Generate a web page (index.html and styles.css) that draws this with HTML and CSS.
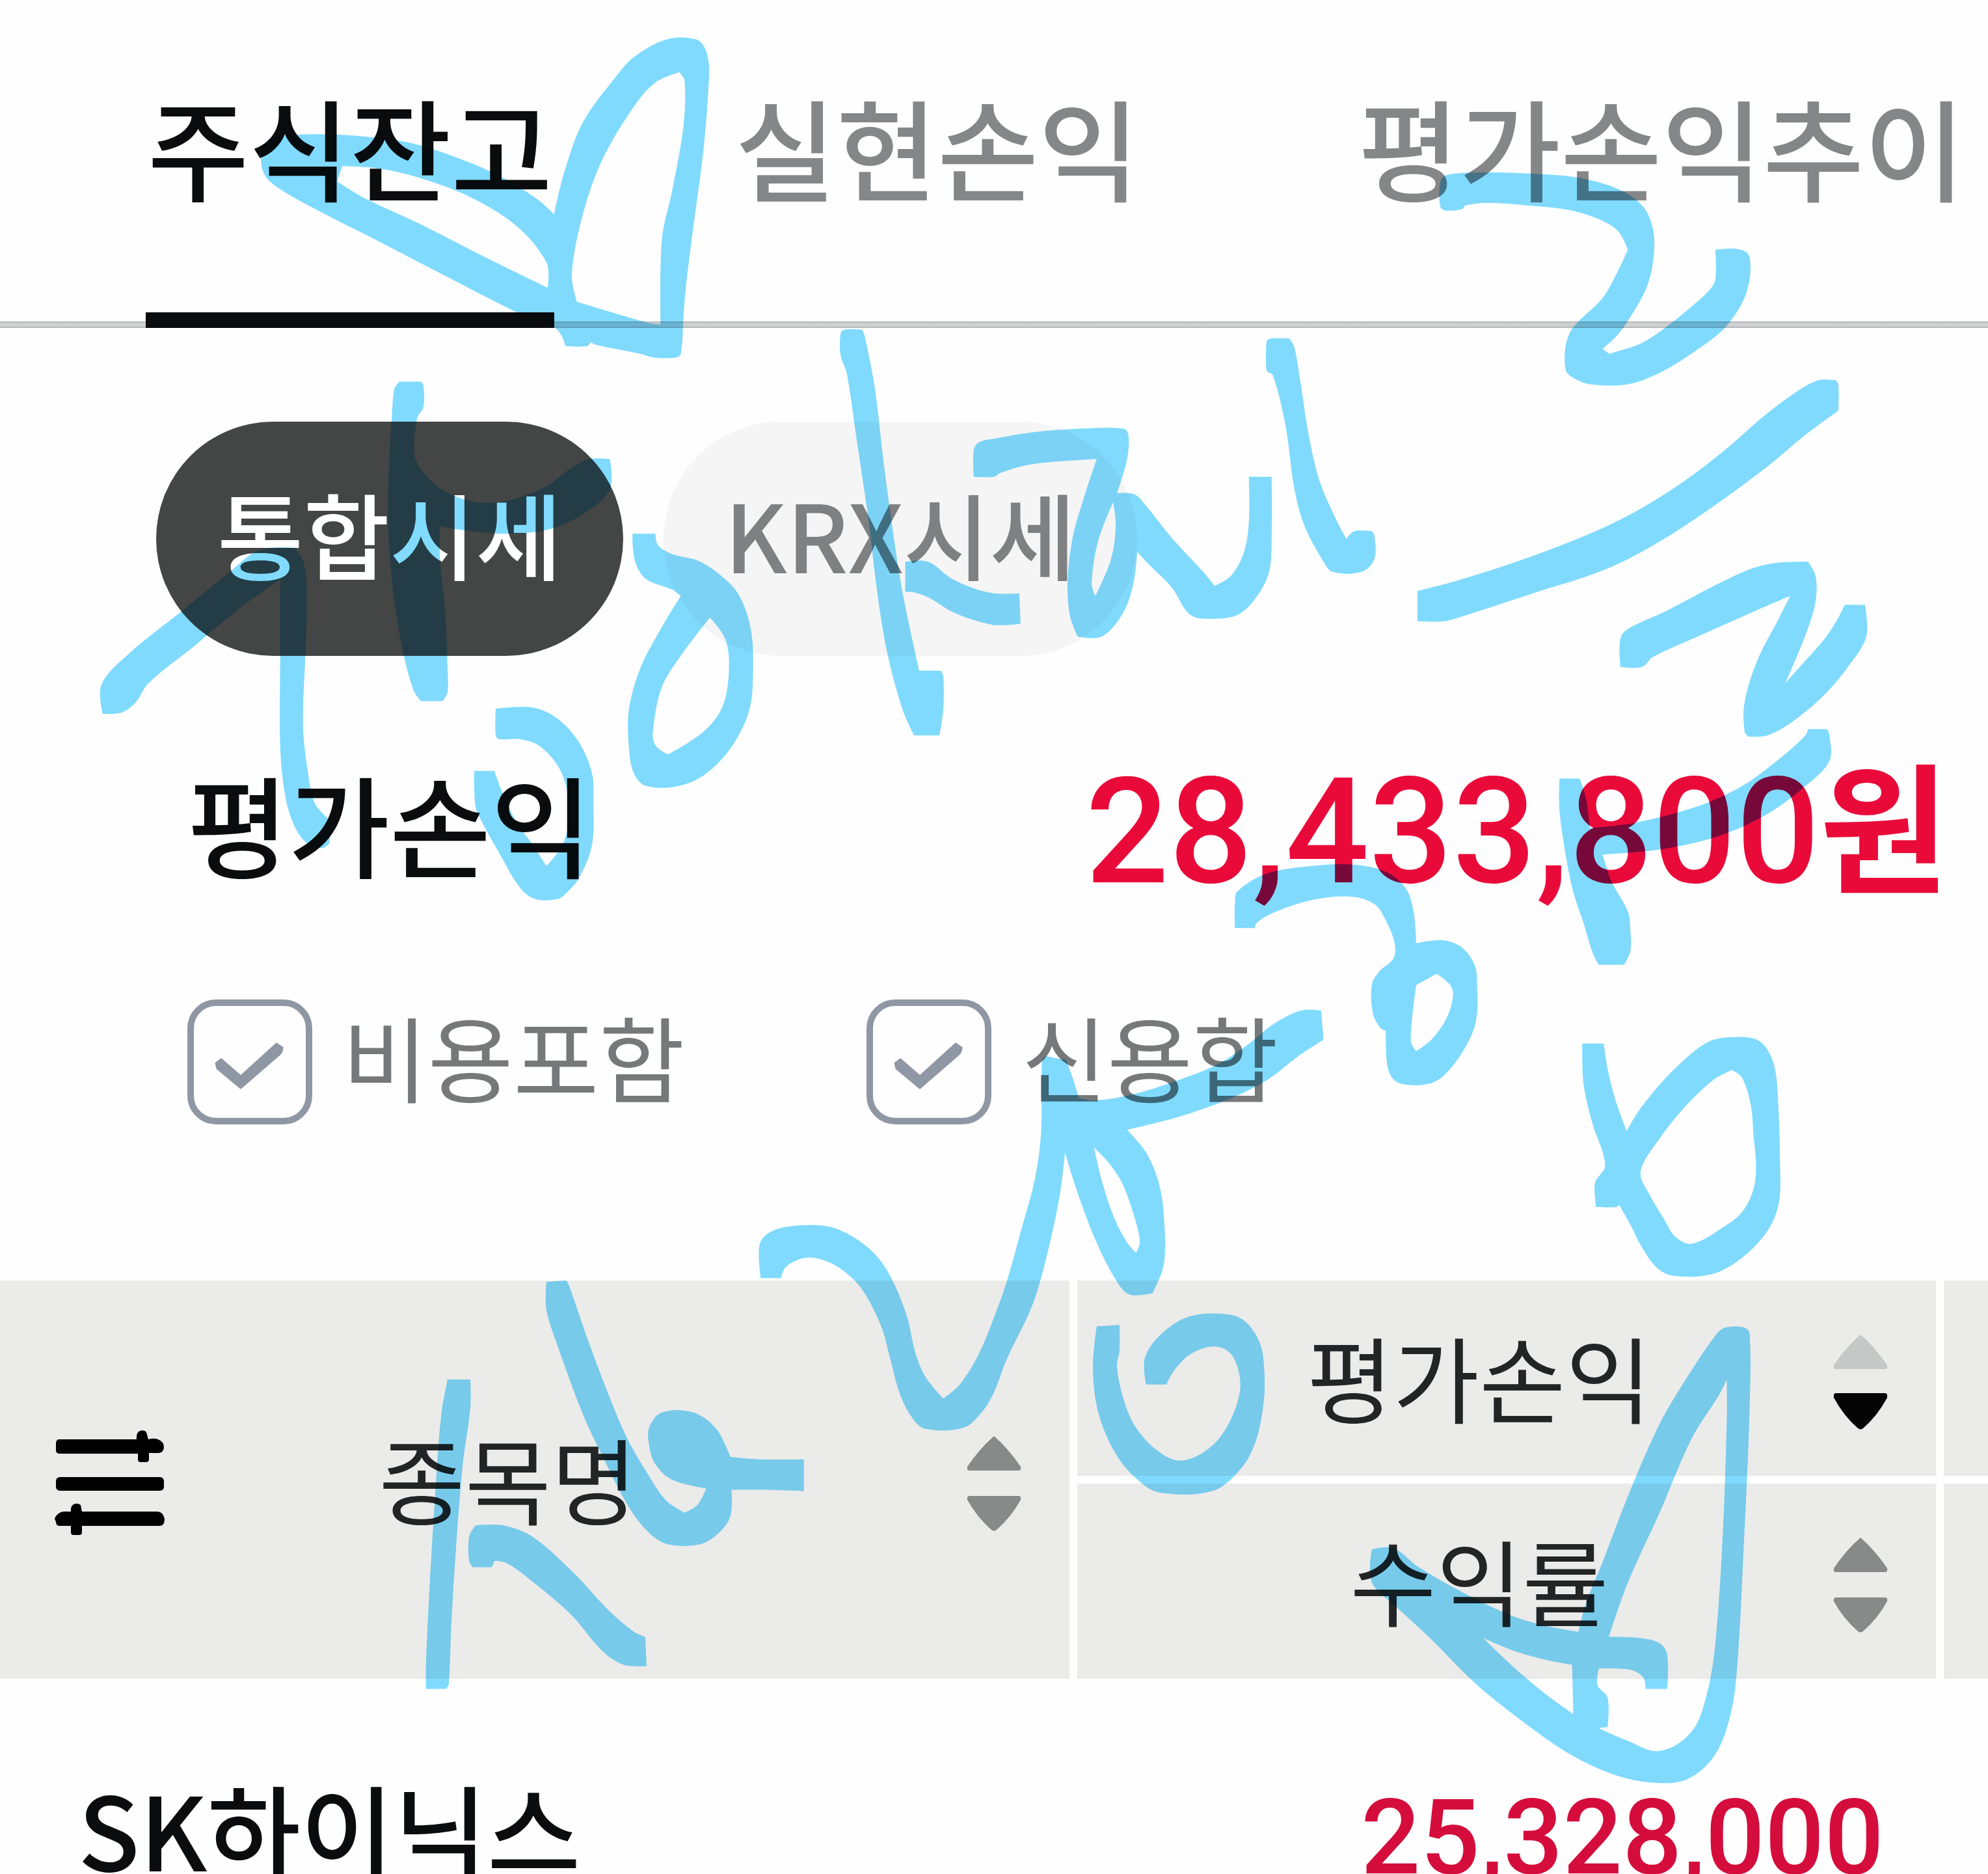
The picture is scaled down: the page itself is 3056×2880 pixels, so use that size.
FILE: index.html
```html
<!DOCTYPE html>
<html lang="ko">
<head>
<meta charset="utf-8">
<meta name="viewport" content="width=device-width, initial-scale=1">
<title>주식잔고</title>
<link rel="stylesheet" href="styles.css">
</head>
<body>
<main class="screen">
  <nav class="tabs">
    <a class="tab tab-active" href="#balance" aria-current="page">주식잔고</a>
    <a class="tab" href="#realized">실현손익</a>
    <a class="tab tab-last" href="#trend">평가손익추이</a>
  </nav>

  <div class="markets">
    <button class="pill pill-active" type="button">통합시세</button>
    <button class="pill" type="button">KRX시세</button>
  </div>

  <section class="summary">
    <h1 class="summary-title">평가손익</h1>
    <strong class="summary-amount">28,433,800<span class="summary-unit">원</span></strong>
  </section>

  <div class="options">
    <label class="option"><input class="check" type="checkbox" checked><span class="option-text">비용포함</span></label>
    <label class="option"><input class="check" type="checkbox" checked><span class="option-text">신용합</span></label>
  </div>

  <table class="holdings">
    <colgroup><col class="col-name"><col><col class="col-more"></colgroup>
    <thead>
      <tr>
        <th rowspan="2" scope="col">
          <div class="head head-name">
            <button class="settings" type="button" aria-label="설정">
              <svg class="settings-icon" viewBox="0 0 170 164" aria-hidden="true">
                <path d="M6 14H126Q125 4 131 1Q138 -1 141 3L144 14Q154 11 161 15Q168 18 168 27Q167 34 160 35H145V45Q145 49 140 49H132Q128 49 128 45V36H8Q2 36 2 31V20Q2 15 6 14Z"/>
                <rect x="2" y="72" width="166" height="21" rx="6"/>
                <path d="M25 125Q24 117 29 114Q35 111 40 115L42 125H158Q166 125 169 136Q169 147 162 147H42V157Q42 161 38 161H29Q25 161 25 157V147H8Q2 147 2 141L0 136Q4 126 14 125Z"/>
              </svg>
            </button>
            <button class="sort" type="button">
              <span class="sort-label">종목명</span>
              <svg class="arrows" viewBox="0 0 84 148" aria-hidden="true">
                <path class="arrow" d="M42 1Q64 20 83 48Q84 54 80 54H4Q0 54 1 48Q20 20 42 1Z"/>
                <path class="arrow" d="M4 93H80Q84 93 83 99Q68 126 46 145Q42 148 38 145Q16 126 1 99Q0 93 4 93Z"/>
              </svg>
            </button>
          </div>
        </th>
        <th scope="col">
          <div class="head">
            <button class="sort" type="button">
              <span class="sort-label">평가손익</span>
              <svg class="arrows" viewBox="0 0 84 148" aria-hidden="true">
                <path class="arrow arrow-dim" d="M42 1Q64 20 83 48Q84 54 80 54H4Q0 54 1 48Q20 20 42 1Z"/>
                <path class="arrow arrow-on" d="M4 91H80Q84 91 83 98Q68 126 46 145Q42 148 38 145Q16 126 1 98Q0 91 4 91Z"/>
              </svg>
            </button>
          </div>
        </th>
        <th></th>
      </tr>
      <tr>
        <th scope="col">
          <div class="head">
            <button class="sort" type="button">
              <span class="sort-label">수익률</span>
              <svg class="arrows" viewBox="0 0 84 148" aria-hidden="true">
                <path class="arrow" d="M42 1Q64 20 83 48Q84 54 80 54H4Q0 54 1 48Q20 20 42 1Z"/>
                <path class="arrow" d="M4 93H80Q84 93 83 99Q68 126 46 145Q42 148 38 145Q16 126 1 99Q0 93 4 93Z"/>
              </svg>
            </button>
          </div>
        </th>
        <th></th>
      </tr>
    </thead>
    <tbody>
      <tr>
        <td class="stock">SK하이닉스</td>
        <td class="profit">25,328,000</td>
        <td></td>
      </tr>
    </tbody>
  </table>

  <svg class="ink" viewBox="0 0 1568 1478" preserveAspectRatio="none" aria-hidden="true"></svg>
</main>
<script src="ink.js"></script>
</body>
</html>
```

FILE: styles.css
```css
* {
  box-sizing: border-box;
}

body {
  margin: 0;
  background: #fefefe;
  color: #0b0c0e;
  font-family: "Noto Sans CJK KR", "Noto Sans", sans-serif;
}

button {
  margin: 0;
  border: 0;
  padding: 0;
  background: none;
  color: inherit;
  font: inherit;
}

.screen {
  position: relative;
  height: 100vh;
  overflow: hidden;
  background: #fefefe;
}

/* Tabs */
.tabs {
  display: flex;
  height: 504px;
  padding: 0 32px 0 224px;
  gap: 275px;
  background: linear-gradient(#aeb0b1, #cfd0d1 30%, #cfd0d1 70%, #aeb0b1) bottom / 100% 10px no-repeat;
}

.tab {
  padding: 0 3px;
  border-bottom: 24px solid transparent;
  color: #858687;
  font-size: 169px;
  font-weight: 500;
  line-height: 448px;
  text-decoration: none;
  white-space: nowrap;
}

.tab-active {
  border-color: #0b0c0e;
  color: #0b0c0e;
}

.tab-last {
  margin-left: auto;
}

/* Market pills */
.markets {
  display: flex;
  gap: 62px;
  padding: 144px 240px 0;
}

.pill {
  height: 360px;
  padding: 0 94px 20px;
  border-radius: 180px;
  background: #f5f5f5;
  color: #7f8081;
  font-size: 144px;
  font-weight: 500;
  white-space: nowrap;
}

.pill-active {
  background: #444545;
  color: #fff;
}

/* Profit summary */
.summary {
  display: flex;
  justify-content: space-between;
  align-items: center;
  padding: 96px 60px 0 288px;
}

.summary-title {
  margin: 0;
  font-size: 169px;
  font-weight: 500;
  line-height: 320px;
}

.summary-amount {
  padding-top: 30px;
  color: #ea0a3a;
  font-family: Roboto, "Noto Sans CJK KR", sans-serif;
  font-size: 226px;
  font-weight: 500;
  line-height: 290px;
}

.summary-unit {
  font-family: "Noto Sans CJK KR", sans-serif;
  font-size: 216px;
  font-weight: 700;
  line-height: 1;
}

/* Options */
.options {
  display: flex;
  gap: 280px;
  padding: 112px 288px 240px;
}

.option {
  display: flex;
  align-items: center;
  gap: 46px;
  color: #777879;
  font-size: 143px;
  line-height: 172px;
  white-space: nowrap;
}

.option-text {
  padding-bottom: 20px;
}

.check {
  appearance: none;
  width: 192px;
  height: 192px;
  margin: 0;
  border: 10px solid #9097a4;
  border-radius: 44px;
  background: url("data:image/svg+xml,%3Csvg xmlns='http://www.w3.org/2000/svg' viewBox='0 0 172 172'%3E%3Cpath d='M34 88L42 82L72 108L127 58L136 64Q136 70 132 74L72 126L36 96Z' fill='%239097a4' stroke='%239097a4' stroke-width='3' stroke-linejoin='round'/%3E%3C/svg%3E") center / 100% 100% no-repeat;
}

/* Holdings */
.holdings {
  width: 100%;
  border-spacing: 0;
  table-layout: fixed;
}

.col-name {
  width: 53.8%;
}

.col-more {
  width: 80px;
}

.holdings th {
  height: 300px;
  padding: 0;
  border-left: 12px solid #fefefe;
  background: #ebebea;
  background-clip: padding-box;
  font-weight: 400;
}

.holdings th[rowspan] {
  border-left: 0;
}

.holdings tr + tr th {
  height: 312px;
  border-top: 12px solid #fefefe;
}

.head {
  display: flex;
  align-items: center;
  padding: 0 74px;
}

.head-name {
  padding-left: 84px;
}

.settings,
.settings-icon {
  display: block;
  width: 170px;
}

.settings {
  margin-top: 12px;
}

.sort {
  display: flex;
  flex: 1;
  align-items: center;
}

.sort-label {
  flex: 1;
  padding-bottom: 8px;
  color: #232425;
  font-size: 144px;
  line-height: 200px;
}

.head-name .sort-label {
  padding-right: 178px;
}

.arrows {
  width: 84px;
  height: 148px;
  margin-top: 12px;
}

.arrow {
  fill: #888989;
}

.arrow-dim {
  fill: #c6c8c8;
}

.arrow-on {
  fill: #050505;
}

.holdings td {
  height: 456px;
  padding: 0;
  font-size: 156px;
  font-weight: 500;
  line-height: 208px;
  white-space: nowrap;
}

.holdings .stock {
  padding-left: 120px;
}

.holdings .profit {
  padding: 32px 80px 0 0;
  color: #d40d3c;
  font-family: Roboto, "Noto Sans CJK KR", sans-serif;
  font-size: 161px;
  text-align: right;
}

/* Highlighter layer over the whole screen */
.ink {
  position: absolute;
  inset: 0;
  width: 100%;
  height: 100%;
  fill: #81dbff;
  fill-rule: evenodd;
  mix-blend-mode: multiply;
  pointer-events: none;
}
```

FILE: ink.js
```js
// Highlighter marks. Each mark is a list of closed outlines ("x,y x,y ...");
// the first is the outer edge, the others are holes in it.
const marks = [
  ["526,31 549,31 556,38 559,50 559,66 555,117 547,178 541,226 539,251 537,279 533,282 516,282 505,279 470,272 466,270 463,273 446,273 443,265 437,258 405,245 350,217 300,191 245,163 215,145 207,134 207,117 215,109 240,106 280,107 325,113 370,128 400,142 425,158 437,169 445,136 460,96 487,59 500,45",
   "266,143 270,131 300,133 330,140 370,155 407,178 431,207 432,227 385,204 330,176 287,156",
   "536,57 540,64 539,100 530,151 522,189 521,256 509,254 455,238 451,216 460,168 475,126 500,84 517,65"],
  ["1136,144 1141,138 1174,136 1209,137 1244,140 1276,149 1296,163 1304,182 1304,205 1299,226 1289,245 1276,264 1264,275 1269,279 1294,271 1314,258 1334,242 1349,228 1353,220 1353,197 1366,196 1376,198 1380,203 1380,220 1374,239 1359,260 1334,279 1309,294 1284,303 1254,303 1241,298 1235,292 1235,272 1241,258 1264,235 1276,214 1284,197 1276,182 1259,172 1234,165 1204,162 1174,160 1156,162 1153,165 1140,166 1136,163"],
  ["80,540 100,517 142,483 185,448 200,436 215,432 232,432 239,442 242,468 241,513 239,572 243,610 248,633 257,644 260,646 260,665 254,669 242,665 232,651 225,628 221,589 221,516 221,457 190,479 155,508 117,539 107,554 96,562 81,563"],
  ["315,301 332,301 334,304 334,321 329,330 327,359 335,374 350,387 375,396 400,395 430,384 452,368 465,362 481,362 481,386 462,404 435,417 400,421 365,418 347,415 347,442 351,480 353,527 353,546 349,553 332,553 326,544 317,510 310,465 306,410 307,365 309,330 311,307"],
  ["499,421 517,421 519,430 530,437 550,442 565,451 582,468 592,495 594,527 591,560 577,589 557,610 535,620 510,620 500,610 496,589 496,560 505,527 520,498 537,470 530,465 510,457 502,446 499,430",
   "560,487 572,504 575,527 570,557 555,577 527,595 517,588 515,577 522,542 540,513"],
  ["663,263 666,260 680,260 682,265 690,306 697,365 705,424 712,468 725,529 742,529 744,533 744,560 741,580 721,580 712,560 700,516 692,468 685,410 675,342 668,295 663,280"],
  ["714,443 732,443 750,456 768,464 785,468 804,468 805,492 785,493 768,489 750,482 732,471 720,467 714,467"],
  ["768,355 772,349 784,346 814,341 854,338 886,338 890,343 889,362 881,389 895,390 904,399 924,424 949,451 958,462 971,454 981,436 985,412 985,376 1003,376 1003,424 1001,451 991,471 976,485 956,488 939,485 924,463 906,445 897,435 894,460 886,483 869,502 850,502 844,486 842,460 846,424 856,389 865,362 834,364 809,367 789,373 784,376 768,376",
   "878,396 880,415 876,442 864,470 861,460 866,427"],
  ["999,269 1002,267 1017,267 1021,274 1026,303 1032,342 1041,380 1054,410 1062,425 1068,419 1082,419 1084,422 1084,441 1074,451 1051,451 1044,443 1029,415 1021,386 1014,336 1004,296 999,292"],
  ["1434,300 1448,300 1450,303 1450,324 1424,343 1394,368 1349,401 1304,430 1264,450 1209,468 1154,486 1139,490 1118,490 1118,466 1149,458 1199,442 1249,423 1289,404 1329,379 1364,352 1389,330 1414,311"],
  ["1278,504 1284,496 1314,482 1354,461 1380,449 1400,444 1426,443 1432,454 1432,474 1424,501 1408,539 1424,521 1439,504 1449,489 1455,477 1471,477 1472,502 1459,524 1439,548 1414,569 1394,580 1379,581 1376,577 1376,554 1386,521 1404,486 1412,470 1384,482 1339,502 1304,518 1295,526 1278,526"],
  ["1230,614 1246,614 1251,630 1254,653 1289,649 1339,636 1374,620 1404,598 1424,580 1426,575 1441,575 1443,580 1443,600 1424,620 1394,642 1354,660 1309,670 1264,674 1271,695 1284,719 1286,735 1286,750 1281,761 1261,761 1256,751 1249,728 1241,704 1235,675 1230,639"],
  ["974,712 976,703 999,689 1034,683 1069,682 1094,688 1109,701 1115,719 1117,744 1129,742 1141,742 1154,748 1163,761 1165,775 1164,806 1154,829 1139,848 1126,855 1106,855 1098,850 1094,839 1093,813 1089,811 1083,800 1082,777 1088,766 1099,756 1100,744 1094,728 1084,713 1064,707 1034,710 1004,720 991,728 990,732 974,732",
   "1133,768 1144,777 1146,786 1141,803 1129,820 1117,829 1113,822 1114,801 1117,777"],
  ["1248,823 1265,823 1268,843 1274,867 1283,892 1294,874 1314,850 1334,831 1349,821 1364,818 1383,819 1392,825 1399,839 1402,860 1404,919 1403,949 1394,971 1374,992 1350,1005 1319,1006 1306,999 1294,982 1286,966 1277,950 1275,952 1259,952 1258,933 1266,919 1256,886 1249,855",
   "1366,844 1374,850 1381,872 1383,895 1385,919 1383,938 1374,956 1359,968 1334,981 1321,975 1314,964 1301,942 1294,924 1309,898 1329,873 1351,852"],
  ["391,559 420,558 440,567 457,586 467,610 468,630 467,666 457,692 447,704 440,709 422,709 410,700 395,675 380,648 375,636 374,608 390,608 395,622 407,648 420,666 431,683 444,666 449,642 447,622 440,604 425,588 410,583 394,583 391,580"],
  ["599,982 607,972 625,967 652,967 672,975 690,989 702,1006 715,1037 722,1067 730,1086 744,1103 757,1092 772,1068 784,1039 794,1011 806,968 816,931 821,895 822,836 825,833 841,836 846,850 851,866 864,868 894,863 929,852 959,840 984,824 1004,808 1026,797 1042,797 1044,820 1024,833 999,852 969,867 929,881 889,891 904,909 914,933 918,959 918,997 909,1020 891,1021 881,1011 864,978 849,938 840,909 836,942 826,989 814,1030 794,1072 784,1098 775,1113 760,1126 730,1127 720,1119 710,1100 702,1071 695,1046 680,1017 665,1002 650,994 635,992 620,999 616,1008 600,1008",
   "863,905 876,919 886,935 896,964 899,980 896,988 889,980 879,961 869,931"],
  ["353,1088 371,1088 371,1110 365,1155 360,1216 356,1280 354,1328 352,1332 336,1332 336,1312 339,1248 344,1167 348,1116"],
  ["370,1212 375,1203 397,1203 420,1212 452,1240 480,1270 500,1287 509,1291 510,1314 492,1313 475,1302 450,1273 422,1249 400,1233 390,1231 388,1236 373,1236 370,1231"],
  ["431,1011 447,1010 450,1017 462,1052 480,1100 495,1135 510,1161 525,1183 540,1193 550,1187 557,1174 530,1167 517,1155 512,1140 512,1126 522,1114 547,1114 565,1127 576,1149 600,1151 634,1151 634,1176 600,1175 577,1175 576,1196 567,1209 552,1218 527,1218 512,1209 495,1187 475,1148 460,1116 440,1062 431,1033"],
  ["865,1046 883,1045 883,1065 881,1078 886,1103 896,1126 914,1145 932,1152 954,1142 969,1123 978,1097 976,1078 969,1066 956,1062 939,1068 926,1081 920,1092 904,1092 903,1071 916,1052 939,1038 971,1037 984,1044 994,1060 997,1078 997,1103 991,1135 979,1158 956,1176 914,1177 896,1166 879,1145 866,1113 862,1078"],
  ["1361,1047 1376,1047 1380,1052 1380,1110 1376,1206 1369,1328 1361,1366 1349,1389 1329,1404 1304,1406 1274,1400 1239,1384 1204,1360 1164,1328 1129,1293 1101,1267 1082,1248 1082,1222 1099,1221 1119,1236 1154,1256 1189,1273 1214,1281 1245,1287 1251,1264 1264,1232 1284,1180 1309,1123 1334,1081 1354,1052",
   "1362,1088 1362,1119 1359,1206 1353,1296 1346,1337 1334,1366 1309,1381 1284,1373 1261,1363 1268,1362 1268,1339 1260,1329 1261,1316 1286,1317 1296,1323 1298,1332 1315,1332 1315,1305 1309,1296 1294,1292 1269,1291 1284,1248 1309,1193 1334,1135 1356,1100",
   "1170,1292 1194,1302 1219,1309 1240,1313 1241,1352 1219,1336 1194,1315"]
];

// Turns an outline into a smooth closed path, keeping its sharp corners.
function outlinePath(text) {
  const pts = text.split(" ").map(p => p.split(",").map(Number));
  const n = pts.length;
  const at = i => pts[(i + n) % n];
  const tangents = pts.map((p, i) => {
    const a = at(i - 1), b = at(i + 1);
    const ux = p[0] - a[0], uy = p[1] - a[1], vx = b[0] - p[0], vy = b[1] - p[1];
    if ((ux * vx + uy * vy) / (Math.hypot(ux, uy) * Math.hypot(vx, vy)) < 0.6) return [0, 0];
    const tx = b[0] - a[0], ty = b[1] - a[1], lt = Math.hypot(tx, ty);
    return [tx / lt, ty / lt];
  });
  let d = `M${pts[0]}`;
  for (let i = 0; i < n; i++) {
    const p = at(i), q = at(i + 1), s = tangents[i], t = tangents[(i + 1) % n];
    const k = Math.hypot(q[0] - p[0], q[1] - p[1]) / 3;
    d += `C${p[0] + s[0] * k},${p[1] + s[1] * k} ${q[0] - t[0] * k},${q[1] - t[1] * k} ${q}`;
  }
  return d + "Z";
}

const layer = document.querySelector(".ink");
for (const mark of marks) {
  const path = document.createElementNS("http://www.w3.org/2000/svg", "path");
  path.setAttribute("d", mark.map(outlinePath).join(""));
  layer.append(path);
}
```
